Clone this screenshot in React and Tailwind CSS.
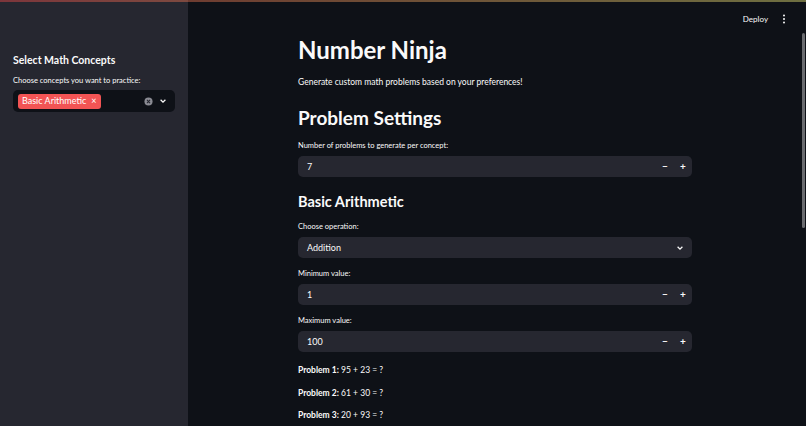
import React from "react";

const font = { fontFamily: "Lato, 'Noto Sans', sans-serif" };

function NumberInput({ value }) {
  return (
    <div className="flex h-[21px] w-[394px] items-center rounded-[5px] bg-[#262730] pl-[9px] text-[9px] text-[#fafafa]">
      <span className="flex-1">{value}</span>
      <span className="w-[18px] text-center text-[10px] font-bold">−</span>
      <span className="w-[18px] text-center text-[10px] font-bold">+</span>
    </div>
  );
}

function Label({ children }) {
  return <div className="text-[7.5px] leading-[10px] text-[#fafafa]">{children}</div>;
}

export default function App() {
  return (
    <div className="relative h-[426px] w-[806px] overflow-hidden bg-[#0e1117] text-[#fafafa]" style={font}>
      <div className="absolute left-0 right-0 top-0 z-10 h-[2px] bg-gradient-to-r from-[#ff4b4b] to-[#fffd80] opacity-40" />
      <div className="flex h-full">
        <aside className="flex h-full w-[188px] shrink-0 flex-col bg-[#262730] px-[13px] pt-[53px]">
          <div className="text-[10.5px] font-bold leading-[14px]">Select Math Concepts</div>
          <div className="mt-[9px] text-[7.5px] leading-[10px]">Choose concepts you want to practice:</div>
          <div className="mt-[4px] flex h-[22px] items-center rounded-[5px] bg-[#0e1117] pl-[5px] pr-[8px]">
            <div className="flex h-[15px] items-center gap-[5px] rounded-[3px] bg-[#f25454] px-[4px] text-[9px] text-white">
              <span>Basic Arithmetic</span>
              <span className="text-[9px]">×</span>
            </div>
            <div className="flex-1" />
            <svg width="9" height="9" viewBox="0 0 10 10" className="mr-[6px]">
              <circle cx="5" cy="5" r="4.5" fill="#8a8b93" />
              <path d="M3.3 3.3 L6.7 6.7 M6.7 3.3 L3.3 6.7" stroke="#262730" strokeWidth="1.2" />
            </svg>
            <svg width="8" height="8" viewBox="0 0 10 10">
              <path d="M2 3.5 L5 6.5 L8 3.5" stroke="#fafafa" strokeWidth="1.6" fill="none" />
            </svg>
          </div>
        </aside>
        <main className="relative flex-1">
          <div className="absolute right-[20px] top-[13px] flex items-center gap-[14px]">
            <span className="text-[8px] text-[#fafafa]">Deploy</span>
            <svg width="4" height="10" viewBox="0 0 4 10">
              <circle cx="2" cy="1.5" r="1" fill="#fafafa" />
              <circle cx="2" cy="5" r="1" fill="#fafafa" />
              <circle cx="2" cy="8.5" r="1" fill="#fafafa" />
            </svg>
          </div>
          <div className="absolute right-[1px] top-[33px] h-[195px] w-[3px] rounded-full bg-[#6b6c70]" />
          <div className="ml-[110px] flex w-[394px] flex-col pt-[34px]">
            <h1 className="text-[24px] font-bold leading-[32px]">Number Ninja</h1>
            <p className="mt-[10px] text-[8.5px] leading-[12px]">Generate custom math problems based on your preferences!</p>
            <h2 className="mt-[17px] text-[19px] font-bold leading-[26px]">Problem Settings</h2>
            <div className="mt-[10px]"><Label>Number of problems to generate per concept:</Label></div>
            <div className="mt-[5px]"><NumberInput value="7" /></div>
            <h3 className="mt-[15px] text-[14.5px] font-bold leading-[20px]">Basic Arithmetic</h3>
            <div className="mt-[10px]"><Label>Choose operation:</Label></div>
            <div className="mt-[5px] flex h-[21px] items-center rounded-[5px] bg-[#262730] pl-[9px] pr-[8px] text-[9px]">
              <span className="flex-1">Addition</span>
              <svg width="8" height="8" viewBox="0 0 10 10">
                <path d="M2 3.5 L5 6.5 L8 3.5" stroke="#fafafa" strokeWidth="1.6" fill="none" />
              </svg>
            </div>
            <div className="mt-[11px]"><Label>Minimum value:</Label></div>
            <div className="mt-[5px]"><NumberInput value="1" /></div>
            <div className="mt-[11px]"><Label>Maximum value:</Label></div>
            <div className="mt-[5px]"><NumberInput value="100" /></div>
            <div className="mt-[12px] flex flex-col gap-[10.5px] text-[8.5px] leading-[12px]">
              <div><b>Problem 1:</b> 95 + 23 = ?</div>
              <div><b>Problem 2:</b> 61 + 30 = ?</div>
              <div><b>Problem 3:</b> 20 + 93 = ?</div>
            </div>
          </div>
        </main>
      </div>
    </div>
  );
}
